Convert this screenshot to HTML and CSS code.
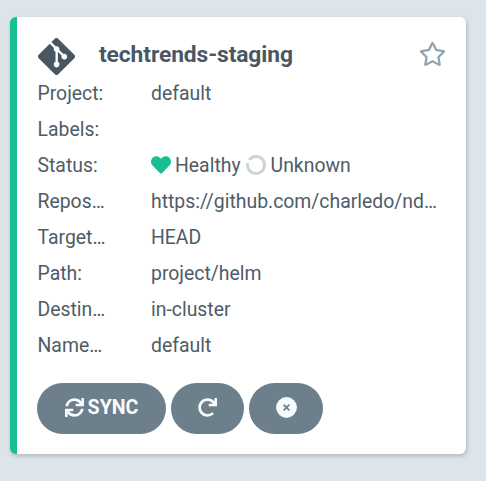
FILE: index.html
```html
<!DOCTYPE html>
<html lang="en">
<head>
<meta charset="utf-8">
<title>Applications</title>
<link rel="stylesheet" href="styles.css">
</head>
<body>
<article class="card">
  <header class="head">
    <svg class="git" viewBox="0 32 448 448"><path d="M439.55 236.05L244 40.45a28.87 28.87 0 0 0-40.81 0l-40.66 40.63 51.52 51.52c27.06-9.14 52.68 16.77 43.39 43.68l49.66 49.66c34.23-11.8 61.18 31 35.47 56.69-26.49 26.49-70.21-2.87-56-37.34L240.22 199v121.85c25.3 12.54 22.26 41.85 9.08 55a34.34 34.34 0 0 1-48.55 0c-17.57-17.6-11.07-46.91 11.25-56v-123c-20.8-8.51-24.6-30.74-18.64-45L142.57 101 8.45 235.14a28.86 28.86 0 0 0 0 40.81l195.61 195.6a28.86 28.86 0 0 0 40.8 0l194.69-194.69a28.86 28.86 0 0 0 0-40.81z"/></svg>
    <h1 class="title">techtrends-staging</h1>
    <svg class="star" viewBox="0 0 576 512"><path d="M528.1 171.5L382 150.2 316.7 17.8c-11.7-23.6-45.6-23.9-57.4 0L194 150.2 47.9 171.5c-26.2 3.8-36.7 36.1-17.7 54.6l105.7 103-25 145.5c-4.5 26.3 23.2 46 46.4 33.7L288 439.6l130.7 68.7c23.2 12.2 50.9-7.4 46.4-33.7l-25-145.5 105.7-103c19-18.5 8.5-50.8-17.7-54.6zM388.6 312.3l23.7 138.4L288 385.4l-124.3 65.3 23.7-138.4-100.6-98 139-20.2 62.2-126 62.2 126 139 20.2-100.6 98z"/></svg>
  </header>
  <dl class="info">
    <dt>Project:</dt><dd>default</dd>
    <dt>Labels:</dt><dd></dd>
    <dt>Status:</dt>
    <dd class="status">
      <svg class="heart" viewBox="0 0 512 512"><path d="M462.3 62.6C407.5 15.9 326 24.3 275.7 76.2L256 96.5l-19.7-20.3C186.1 24.3 104.5 15.9 49.7 62.6c-62.8 53.6-66.1 149.8-9.9 207.9l193.5 199.8c12.5 12.9 32.8 12.9 45.3 0l193.5-199.8c56.3-58.1 53-154.3-9.8-207.9z"/></svg>
      <span class="health">Healthy</span>
      <svg class="ring" viewBox="0 0 20 20"><path d="M3.2 4.9A8.5 8.5 0 1 1 1.7 8.2"/></svg>
      <span>Unknown</span>
    </dd>
    <dt>Repository:</dt><dd>https://github.com/charledo/nd064_course_1</dd>
    <dt>Target Revision:</dt><dd>HEAD</dd>
    <dt>Path:</dt><dd>project/helm</dd>
    <dt>Destination:</dt><dd>in-cluster</dd>
    <dt>Namespace:</dt><dd>default</dd>
  </dl>
  <footer class="actions">
    <button class="btn sync"><svg class="icon" viewBox="0 0 512 512"><path d="M440.65 12.57l4 82.77A247.16 247.16 0 0 0 255.83 8C134.73 8 33.91 94.92 12.29 209.82A12 12 0 0 0 24.09 224h49.05a12 12 0 0 0 11.67-9.26 175.91 175.91 0 0 1 317-56.94l-101.46-4.86a12 12 0 0 0-12.57 12v47.41a12 12 0 0 0 12 12H500a12 12 0 0 0 12-12V12a12 12 0 0 0-12-12h-47.37a12 12 0 0 0-11.98 12.57zM255.83 432a175.61 175.61 0 0 1-146-77.8l101.8 4.87a12 12 0 0 0 12.57-12v-47.4a12 12 0 0 0-12-12H12a12 12 0 0 0-12 12V500a12 12 0 0 0 12 12h47.35a12 12 0 0 0 12-12.6l-4.15-82.57A247.17 247.17 0 0 0 255.83 504c121.11 0 221.93-86.92 243.55-201.82a12 12 0 0 0-11.8-14.18h-49.05a12 12 0 0 0-11.67 9.26A175.86 175.86 0 0 1 255.83 432z"/></svg><span>SYNC</span></button>
    <button class="btn"><svg class="icon" viewBox="0 0 512 512"><path d="M500.33 0h-47.41a12 12 0 0 0-12 12.57l4 82.76A247.42 247.42 0 0 0 256 8C119.34 8 7.9 119.53 8 256.19 8.1 393.07 119.1 504 256 504a247.1 247.1 0 0 0 166.18-63.91 12 12 0 0 0 .48-17.43l-34-34a12 12 0 0 0-16.38-.55A176 176 0 1 1 402.1 157.8l-101.53-4.87a12 12 0 0 0-12.57 12v47.41a12 12 0 0 0 12 12h200.33a12 12 0 0 0 12-12V12a12 12 0 0 0-12-12z"/></svg></button>
    <button class="btn"><svg class="close" viewBox="0 0 21 21"><circle cx="10.5" cy="10.5" r="10.4"/><path d="M7.6 7.6l5.8 5.8M13.4 7.6l-5.8 5.8"/></svg></button>
  </footer>
</article>
</body>
</html>
```

FILE: styles.css
```css
* { box-sizing: border-box; }
body {
  margin: 0;
  height: 481px;
  padding: 17px 20px 27px 10px;
  background: #dde4ea;
  color: #495763;
  font-family: Roboto, sans-serif;
  font-size: 19.4px;
  overflow: hidden;
}
svg { display: block; flex: none; fill: currentColor; }
.card {
  height: 437px;
  padding: 20px;
  border-left: 7px solid #18be94;
  border-radius: 6px;
  background: #fff;
  box-shadow: 1px 2px 4px rgba(70, 85, 95, .3);
}
.head { display: flex; align-items: center; height: 38px; }
.git { width: 37px; height: 37px; margin: 1px 0 0 1px; }
.title { flex: 1; margin: -2px 0 0 24px; font-size: 22.8px; font-weight: 700; line-height: 36px; letter-spacing: -.1px; }
.star { width: 27px; height: 24px; margin-top: -5px; color: #8fa4b1; }
.info {
  display: grid;
  grid-template-columns: 70px 1fr;
  grid-auto-rows: 36px;
  column-gap: 44px;
  margin: 0;
  line-height: 37px;
  color: #4f5c67;
}
.info dt, .info dd { margin: 0; overflow: hidden; text-overflow: ellipsis; white-space: nowrap; }
.info dt { padding-left: .5px; }
.info .status { display: flex; align-items: center; }
.heart { width: 20px; height: 20px; margin-right: 4px; color: #18be94; }
.health { margin-right: 5px; }
.ring { width: 20px; height: 20px; margin-right: 5px; fill: none; stroke: #ccd3d9; stroke-width: 3; }
.actions { display: flex; gap: 5px; margin-top: 20px; }
.btn {
  display: flex;
  align-items: center;
  justify-content: center;
  width: 73.4px;
  height: 51px;
  padding: 0 0 3px;
  border: 0;
  border-radius: 26px;
  background: #6d7f8b;
  color: #f8fbfd;
  font: 700 19.6px Roboto, sans-serif;
}
.sync { width: 129px; gap: 4px; }
.icon { width: 19px; height: 19px; }
.close { width: 21px; height: 21px; }
.close path { fill: none; stroke: #6d7f8b; stroke-width: 1.7; }
```
